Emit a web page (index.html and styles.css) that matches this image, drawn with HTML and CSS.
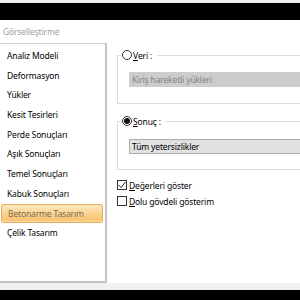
FILE: index.html
```html
<!DOCTYPE html>
<html lang="tr">
<head>
    <meta charset="utf-8">
    <title>Görselleştirme</title>
    <link rel="stylesheet" href="styles.css">
</head>
<body>
    <div class="top-strip"></div>
    <div class="black-bar"></div>

    <!-- Header -->
    <div class="header">Görselleştirme</div>

    <div class="main">
        <!-- Category list -->
        <div class="list">
            <div class="item">Analiz Modeli</div>
            <div class="item">Deformasyon</div>
            <div class="item">Yükler</div>
            <div class="item">Kesit Tesirleri</div>
            <div class="item">Perde Sonuçları</div>
            <div class="item">Aşık Sonuçları</div>
            <div class="item">Temel Sonuçları</div>
            <div class="item">Kabuk Sonuçları</div>
            <div class="item selected">Betonarme Tasarım</div>
            <div class="item">Çelik Tasarım</div>
        </div>

        <!-- Options pane -->
        <div class="pane">
            <fieldset class="group">
                <legend><span class="radio"></span><u>V</u>eri :</legend>
                <div class="combo disabled">Kiriş hareketli yükleri</div>
            </fieldset>

            <fieldset class="group second">
                <legend><span class="radio checked"></span><u>S</u>onuç :</legend>
                <div class="combo">Tüm yetersizlikler</div>
            </fieldset>

            <div class="checks">
                <div class="check-row">
                    <span class="checkbox">
                        <svg width="8" height="8" viewBox="0 0 8 8"><polyline points="0.5,4 3,6.5 7.5,1" fill="none" stroke="#222" stroke-width="1"/></svg>
                    </span>
                    <u>D</u>eğerleri göster
                </div>
                <div class="check-row">
                    <span class="checkbox"></span>
                    <u>D</u>olu gövdeli gösterim
                </div>
            </div>
        </div>
    </div>

    <div class="footer"></div>
    <div class="black-bar bottom"></div>
</body>
</html>
```

FILE: styles.css
```css
* {
    margin: 0;
    padding: 0;
    box-sizing: border-box;
}

body {
    width: 300px;
    height: 300px;
    overflow: hidden;
    background: #fff;
    font-family: "Noto Sans", sans-serif;
    font-size: 8.5px;
    letter-spacing: -0.15px;
    color: #000;
}

.top-strip {
    height: 3px;
    background: #f0f0f0;
}

.black-bar {
    height: 17px;
    background: #000;
}

.black-bar.bottom {
    height: 10px;
}

/* Header */
.header {
    height: 23px;
    line-height: 24px;
    padding-left: 3px;
    color: #a0a0a0;
}

.main {
    display: flex;
    height: 240px;
}

/* Category list */
.list {
    width: 109px;
    margin-left: -2px;
    border: 1px solid #d0d0d0;
    border-right: 2px solid #c4c4c4;
    border-bottom: 2px solid #c4c4c4;
    padding: 2px 2px 0 2px;
    background: #fff;
}

.item {
    height: 19.7px;
    line-height: 19.7px;
    padding-left: 6px;
}

.item.selected {
    color: #7d6d55;
    border: 1px solid #e6b060;
    border-radius: 2px;
    line-height: 17.7px;
    background: linear-gradient(#fde8bf, #fbd696 45%, #f8c472 85%, #fbd8a0);
}

/* Options pane */
.pane {
    flex: 1;
    overflow: hidden;
    padding-top: 6px;
}

.group {
    margin: 0 -20px 0 10px;
    border: 1px solid #dcdcdc;
    padding: 11px 0 16px 11px;
}

.group.second {
    margin-top: 11px;
    padding-top: 12px;
    padding-bottom: 15px;
}

.group legend {
    display: flex;
    align-items: center;
    height: 12px;
    margin-left: -7px;
    padding-right: 5px;
}

.radio {
    width: 10px;
    height: 10px;
    border: 1px solid #333;
    border-radius: 50%;
    margin-right: 1px;
    display: flex;
    align-items: center;
    justify-content: center;
    background: #fff;
}

.radio.checked::after {
    content: '';
    width: 6px;
    height: 6px;
    border-radius: 50%;
    background: #111;
}

.combo {
    height: 15px;
    line-height: 13px;
    padding-left: 2px;
    border: 1px solid #adadad;
    background: #e1e1e1;
}

.combo.disabled {
    border-color: #cccccc;
    background: #cccccc;
    color: #838383;
}

.checks {
    margin: 10px 0 0 10px;
    display: flex;
    flex-direction: column;
    gap: 6px;
}

.check-row {
    display: flex;
    align-items: center;
    height: 10px;
}

.checkbox {
    width: 10px;
    height: 10px;
    border: 1px solid #333;
    margin-right: 2px;
    display: flex;
    align-items: center;
    justify-content: center;
    background: #fff;
}

.footer {
    height: 7px;
    background: #f0f0f0;
}
```
